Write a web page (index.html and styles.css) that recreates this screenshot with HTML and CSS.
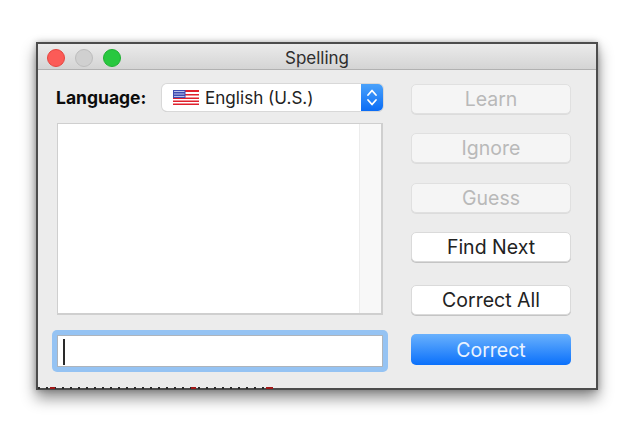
FILE: index.html
```html
<!DOCTYPE html>
<html lang="en">
<head>
<meta charset="utf-8">
<title>Spelling</title>
<link rel="stylesheet" href="styles.css">
</head>
<body>
<div class="window">
  <div class="titlebar">
    <div class="lights">
      <span class="light red"></span>
      <span class="light grey"></span>
      <span class="light green"></span>
    </div>
    <div class="title">Spelling</div>
  </div>
  <div class="content">
    <div class="left">
      <div class="lang-row">
        <span class="lang-label">Language:</span>
        <div class="select">
          <svg class="flag" width="26" height="15" viewBox="0 0 26 15">
            <rect width="26" height="15" fill="#fff"/>
            <g fill="#e0202c">
              <rect y="0" width="26" height="2"/>
              <rect y="4" width="26" height="1.5"/>
              <rect y="7.5" width="26" height="1.5"/>
              <rect y="10.5" width="26" height="1.5"/>
              <rect y="13.5" width="26" height="1.5"/>
            </g>
            <rect width="12.5" height="8" fill="#3f4cb0"/>
            <g fill="#b9c0ea">
              <rect x="1" y="1" width="10.5" height="1"/>
              <rect x="1" y="3.5" width="10.5" height="1"/>
              <rect x="1" y="6" width="10.5" height="1"/>
            </g>
          </svg>
          <span class="select-text">English (U.S.)</span>
          <span class="stepper">
            <svg width="12" height="19" viewBox="0 0 12 19" fill="none" stroke="#fff" stroke-width="1.8" stroke-linecap="round" stroke-linejoin="round">
              <path d="M2 7 L6 2.5 L10 7"/>
              <path d="M2 12 L6 16.5 L10 12"/>
            </svg>
          </span>
        </div>
      </div>
      <div class="listbox"><div class="list-scroll"></div></div>
      <div class="field-ring"><div class="field"><span class="caret"></span></div></div>
    </div>
    <div class="right">
      <button class="btn off">Learn</button>
      <button class="btn off gap-a">Ignore</button>
      <button class="btn off gap-b">Guess</button>
      <button class="btn gap-a">Find Next</button>
      <button class="btn gap-c">Correct All</button>
      <button class="btn primary gap-a">Correct</button>
    </div>
  </div>
  <div class="torn"></div>
</div>
</body>
</html>
```
FILE: styles.css
```css
html, body {
  margin: 0;
  padding: 0;
  background: #fff;
}
body {
  width: 632px;
  height: 430px;
  overflow: hidden;
  padding: 42px 0 0 36px;
  box-sizing: border-box;
  font-family: Inter, "Liberation Sans", sans-serif;
}
.window {
  width: 562px;
  height: 348px;
  box-sizing: border-box;
  border: 2px solid #4c4c4c;
  background: #ececec;
  box-shadow: 0 8px 14px rgba(0, 0, 0, 0.45), 0 0 6px rgba(0, 0, 0, 0.25);
  display: flex;
  flex-direction: column;
  position: relative;
}
.titlebar {
  height: 25px;
  flex: none;
  border-top-left-radius: 4px;
  border-top-right-radius: 4px;
  background: linear-gradient(#ebebeb, #d4d4d4);
  border-bottom: 1px solid #b1b1b1;
  position: relative;
  display: flex;
  align-items: center;
  justify-content: center;
}
.lights {
  position: absolute;
  left: 9px;
  top: 5px;
  display: flex;
  gap: 10px;
}
.light {
  width: 18px;
  height: 18px;
  border-radius: 50%;
  box-sizing: border-box;
}
.red { background: #fc5b57; border: 1px solid #e5453f; }
.grey { background: #d0d0d0; border: 1px solid #bdbdbd; }
.green { background: #28c83f; border: 1px solid #1fb032; }
.title {
  font-size: 17px;
  color: #2e2e2e;
  position: relative;
  top: 1px;
}
.content {
  flex: 1;
  display: flex;
  padding: 14px 0 0 15px;
}
.left {
  width: 335px;
  flex: none;
  margin-right: 23px;
}
.lang-row {
  display: flex;
  align-items: center;
  height: 27px;
  padding-left: 3px;
}
.lang-label {
  width: 106px;
  flex: none;
  font-size: 17.5px;
  font-weight: 700;
  color: #0c0c0c;
}
.select {
  width: 221px;
  height: 27px;
  box-sizing: border-box;
  background: #fff;
  border-radius: 5px;
  box-shadow: 0 0 0 1px #d8d8d8, 0 1px 0 #bdbdbd;
  display: flex;
  align-items: center;
  padding-left: 11px;
  position: relative;
  overflow: hidden;
}
.flag { flex: none; }
.select-text {
  margin-left: 6px;
  font-size: 17.1px;
  color: #222;
}
.stepper {
  position: absolute;
  right: 0;
  top: 0;
  bottom: 0;
  width: 22px;
  background: linear-gradient(#4aa2fb, #0a6cf5);
  display: flex;
  align-items: center;
  justify-content: center;
}
.listbox {
  margin: 12px 0 0 4px;
  width: 326px;
  height: 192px;
  box-sizing: border-box;
  background: #fff;
  border: 2px solid #cfcfcf;
  border-width: 1px 2px 2px 1px;
  display: flex;
  justify-content: flex-end;
}
.list-scroll {
  width: 21px;
  background: #f8f8f8;
  border-left: 1px solid #ececec;
}
.field-ring {
  margin: 15px 0 0 -1px;
  width: 336px;
  height: 42px;
  box-sizing: border-box;
  background: #95c3f3;
  border-radius: 5px;
  padding: 5px;
}
.field {
  height: 100%;
  box-sizing: border-box;
  background: #fff;
  border: 1px solid #adb4bc;
  padding: 3px 0 0 5px;
}
.caret {
  display: block;
  width: 2px;
  height: 26px;
  background: #2a2a2a;
}
.right {
  width: 160px;
  flex: none;
  display: flex;
  flex-direction: column;
}
.btn {
  height: 30px;
  flex: none;
  box-sizing: border-box;
  padding: 0;
  font: inherit;
  font-size: 19.5px;
  background: #fff;
  color: #222;
  border: 1px solid #dadada;
  border-radius: 5px;
  box-shadow: 0 1px 0 #c4c4c4;
}
.btn.off {
  background: #f5f5f5;
  color: #b9b9b9;
  border-color: #e0e0e0;
  box-shadow: 0 1px 0 #dcdcdc;
}
.btn.primary {
  height: 31px;
  color: #eaf3ff;
  border: 0;
  background: linear-gradient(#69b1fd, #0a70fb);
  box-shadow: none;
}
.gap-a { margin-top: 19px; }
.gap-b { margin-top: 20px; }
.gap-c { margin-top: 23px; }
.torn {
  position: absolute;
  left: 0;
  bottom: -1px;
  height: 2px;
  width: 240px;
  background:
    linear-gradient(90deg, #a01818, #a01818) 12px 0 / 5px 2px no-repeat,
    linear-gradient(90deg, #a01818, #a01818) 153px 0 / 5px 2px no-repeat,
    linear-gradient(90deg, #a01818, #a01818) 228px 0 / 7px 2px no-repeat,
    repeating-linear-gradient(90deg, #2a2a2a 0 2px, transparent 2px 8px);
}
```
